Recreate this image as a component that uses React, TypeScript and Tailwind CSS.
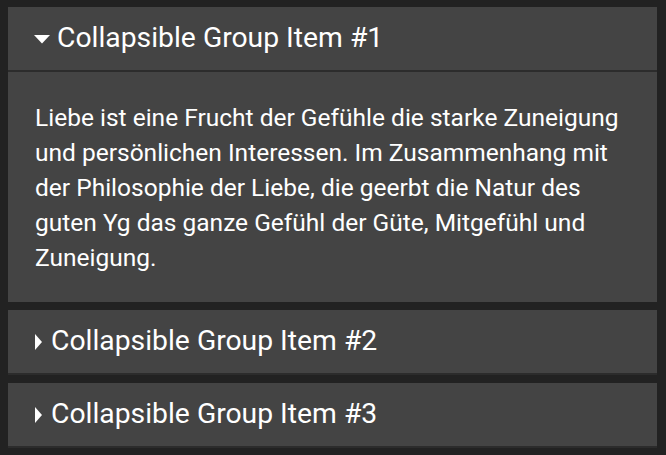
import { useState } from 'react';

const items = [
  {
    title: 'Collapsible Group Item #1',
    body: 'Liebe ist eine Frucht der Gefühle die starke Zuneigung und persönlichen Interessen. Im Zusammenhang mit der Philosophie der Liebe, die geerbt die Natur des guten Yg das ganze Gefühl der Güte, Mitgefühl und Zuneigung.',
  },
  { title: 'Collapsible Group Item #2', body: '' },
  { title: 'Collapsible Group Item #3', body: '' },
];

function CaretDown() {
  return (
    <svg width="16" height="10" viewBox="0 0 16 10" className="mr-[7px] shrink-0">
      <path d="M0 1 L16 1 L8 9.5 Z" fill="#fff" />
    </svg>
  );
}

function CaretRight() {
  return (
    <svg width="7" height="16" viewBox="0 0 7 16" className="ml-[1px] mr-[9px] shrink-0">
      <path d="M0 0 L7 8 L0 16 Z" fill="#fff" />
    </svg>
  );
}

export default function App() {
  const [open, setOpen] = useState(0);

  return (
    <div className="min-h-[455px] bg-[#222222] pt-[7px] pl-[8px] pr-[9px] pb-[7px] font-['Roboto',sans-serif] text-white">
      <div className="flex flex-col gap-[8px]">
        {items.map((item, i) => (
          <div key={i} className="bg-[#444444]">
            <button
              onClick={() => setOpen(open === i ? -1 : i)}
              className="flex h-[65px] w-full items-center border-b-2 border-[#2c2c2c] pl-[26px] text-left text-[28.3px]"
            >
              {open === i ? <CaretDown /> : <CaretRight />}
              <span>{item.title}</span>
            </button>
            {open === i && (
              <div className="pl-[27px] pr-[12px] pt-[28px] pb-[27px] text-[24.5px] leading-[35px]">
                {item.body}
              </div>
            )}
          </div>
        ))}
      </div>
    </div>
  );
}
